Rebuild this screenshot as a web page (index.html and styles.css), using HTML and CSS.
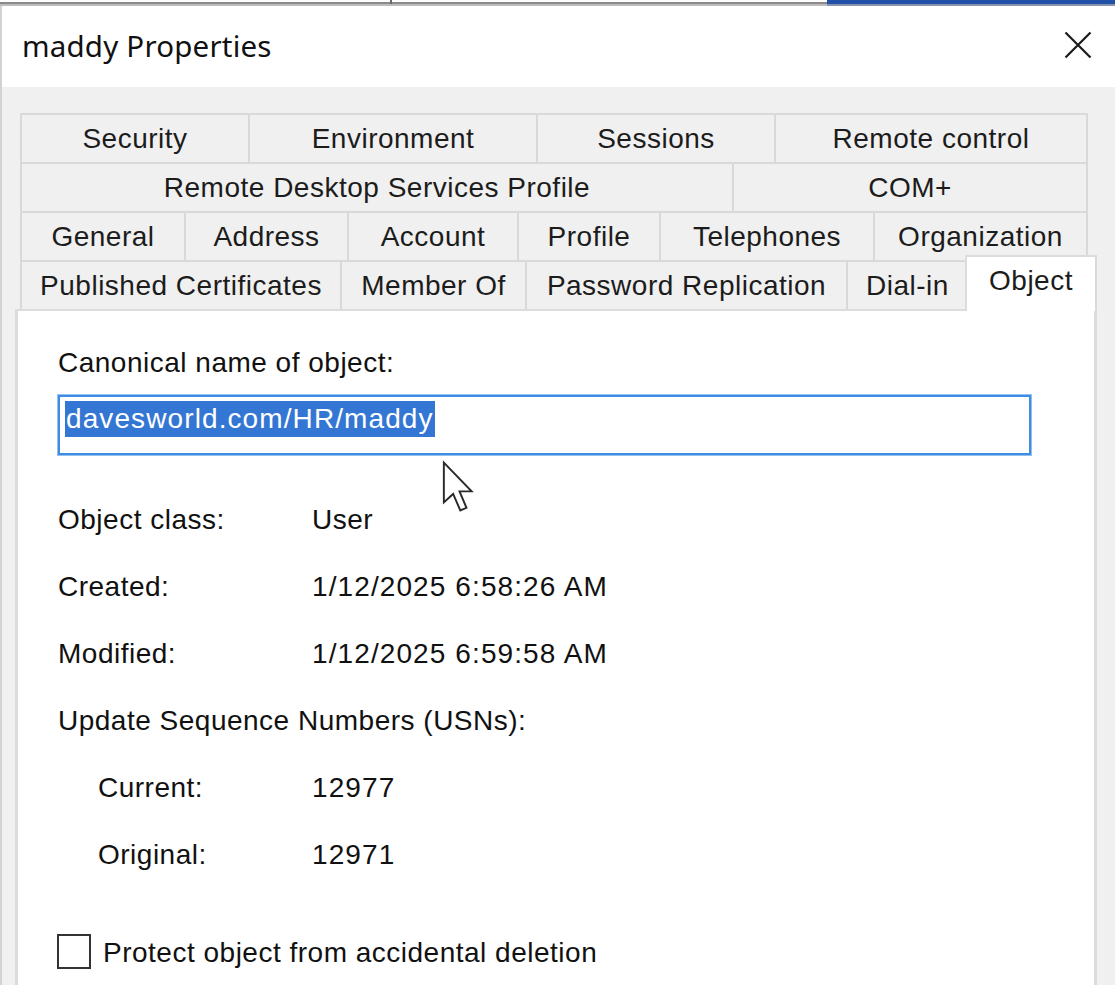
FILE: index.html
```html
<!DOCTYPE html>
<html>
<head>
<meta charset="utf-8">
<link rel="stylesheet" href="styles.css">
</head>
<body>
<div class="strip">
  <div class="strip-gray"><span class="tick"></span></div>
  <div class="strip-blue"></div>
</div>
<div class="dialog">
  <div class="titlebar">
    <span class="title">maddy Properties</span>
    <svg class="close" viewBox="0 0 28 28" width="28" height="28">
      <path d="M1.5 1.5 L26.5 26.5 M26.5 1.5 L1.5 26.5" stroke="#1a1a1a" stroke-width="2.2" fill="none"/>
    </svg>
  </div>
  <div class="client">
    <div class="tabs">
      <div class="tabrow r1">
        <div class="tab">Security</div>
        <div class="tab">Environment</div>
        <div class="tab">Sessions</div>
        <div class="tab">Remote control</div>
      </div>
      <div class="tabrow r2">
        <div class="tab">Remote Desktop Services Profile</div>
        <div class="tab">COM+</div>
      </div>
      <div class="tabrow r3">
        <div class="tab">General</div>
        <div class="tab">Address</div>
        <div class="tab">Account</div>
        <div class="tab">Profile</div>
        <div class="tab">Telephones</div>
        <div class="tab">Organization</div>
      </div>
      <div class="tabrow r4">
        <div class="tab">Published Certificates</div>
        <div class="tab">Member Of</div>
        <div class="tab">Password Replication</div>
        <div class="tab">Dial-in</div>
        <div class="tab selected">Object</div>
      </div>
    </div>
    <div class="panel">
      <div class="label">Canonical name of object:</div>
      <div class="field"><span class="sel">davesworld.com/HR/maddy</span></div>
      <div class="info">
        <div class="row"><span class="k">Object class:</span><span class="v">User</span></div>
        <div class="row"><span class="k">Created:</span><span class="v num">1/12/2025 6:58:26 AM</span></div>
        <div class="row"><span class="k">Modified:</span><span class="v num">1/12/2025 6:59:58 AM</span></div>
        <div class="row">Update Sequence Numbers (USNs):</div>
        <div class="row indent"><span class="k">Current:</span><span class="v num">12977</span></div>
        <div class="row indent"><span class="k">Original:</span><span class="v num">12971</span></div>
      </div>
      <div class="check"><span class="box"></span><span class="check-text">Protect object from accidental deletion</span></div>
    </div>
  </div>
</div>
<svg class="cursor" viewBox="0 0 13 21" width="34" height="54">
  <path d="M1 1 L1 16.5 L4.6 13.2 L7.4 19.6 L9.8 18.6 L7.1 12.2 L11.8 12.2 Z" fill="#fff" stroke="#2a2a2a" stroke-width="0.75" stroke-linejoin="miter"/>
</svg>
</body>
</html>
```
FILE: styles.css
```css
html, body {
  margin: 0;
  padding: 0;
}
body {
  position: relative;
  width: 1115px;
  height: 985px;
  overflow: hidden;
  background: #f0f0f0;
  font-family: "Liberation Sans", Arial, sans-serif;
  font-size: 28px;
  letter-spacing: 0.5px;
  color: #111;
}
.strip {
  display: flex;
  height: 6px;
  background: #fff;
}
.strip-gray {
  position: relative;
  width: 827px;
  background: linear-gradient(#fdfdfd 0 2px, #8a8a8a 2px 4px, #bcbcbc 4px 6px);
}
.tick {
  position: absolute;
  left: 390px;
  top: 0;
  width: 2px;
  height: 4px;
  background: #6a6a6a;
}
.strip-blue {
  flex: 1;
  background: linear-gradient(#2250a8 0 4px, #8593ab 4px 6px);
}
.dialog {
  border-left: 2px solid #d2d2d2;
  height: 979px;
  box-sizing: border-box;
}
.titlebar {
  height: 81px;
  background: #fff;
  display: flex;
  align-items: center;
  justify-content: space-between;
  padding: 0 23px 0 20px;
}
.title {
  font-family: "Noto Sans", "Open Sans", sans-serif;
  font-size: 29.5px;
  letter-spacing: 0.2px;
  color: #111;
  margin-top: -2px;
}
.close {
  display: block;
  margin-top: -4px;
}
.client {
  padding: 26px 0 0 13px;
}
.tabs {
  margin-left: 5px;
}
.tabrow {
  display: grid;
  height: 49px;
}
.r1 { grid-template-columns: 228px 288px 238px 314px; }
.r2 { grid-template-columns: 712px 356px; }
.r3 { grid-template-columns: 164px 163px 170px 142px 214px 215px; }
.r4 { grid-template-columns: 320px 185px 321px 121px 126px; }
.tab {
  box-sizing: border-box;
  border-top: 2px solid #d9d9d9;
  border-left: 2px solid #d9d9d9;
  background: #f0f0f0;
  display: flex;
  align-items: center;
  justify-content: center;
  padding-top: 1px;
  white-space: nowrap;
  color: #1c1c1c;
}
.tabrow .tab:last-child {
  border-right: 2px solid #d9d9d9;
}
.tab.selected {
  position: relative;
  z-index: 1;
  margin: -5px -4px -2px -2px;
  background: #fff;
  border: 2px solid #dcdcdc;
  border-bottom: none;
  padding: 0 0 6px 0;
}
.panel {
  box-sizing: border-box;
  width: 1082px;
  height: 700px;
  background: #fff;
  border-style: solid;
  border-color: #dcdcdc;
  border-width: 2px 3px 0 3px;
  padding: 36px 0 0 40px;
}
.label {
  line-height: 32px;
}
.field {
  box-sizing: border-box;
  width: 975px;
  height: 62px;
  margin: 15px 0 0 -1px;
  border: 1px solid #93c0ee;
  box-shadow: inset 0 0 0 2px #3f8de2;
  padding: 6px 0 0 7px;
}
.sel {
  display: inline-block;
  background: #3376d3;
  color: #fff;
  line-height: 36px;
  letter-spacing: 1.1px;
  padding: 0 1px;
}
.info {
  display: flex;
  flex-direction: column;
  gap: 35px;
  margin-top: 48px;
}
.row {
  display: flex;
  line-height: 32px;
  height: 32px;
  white-space: nowrap;
}
.k {
  width: 254px;
}
.indent {
  padding-left: 40px;
}
.indent .k {
  width: 214px;
}
.num {
  letter-spacing: 1.1px;
}
.check {
  display: flex;
  align-items: flex-start;
  margin: 63px 0 0 -1px;
}
.box {
  box-sizing: border-box;
  width: 34px;
  height: 35px;
  border: 2px solid #333;
  background: #fff;
  flex: none;
}
.check-text {
  margin-left: 12px;
  line-height: 32px;
  margin-top: 3px;
}
.cursor {
  position: absolute;
  left: 441px;
  top: 460px;
}
```
